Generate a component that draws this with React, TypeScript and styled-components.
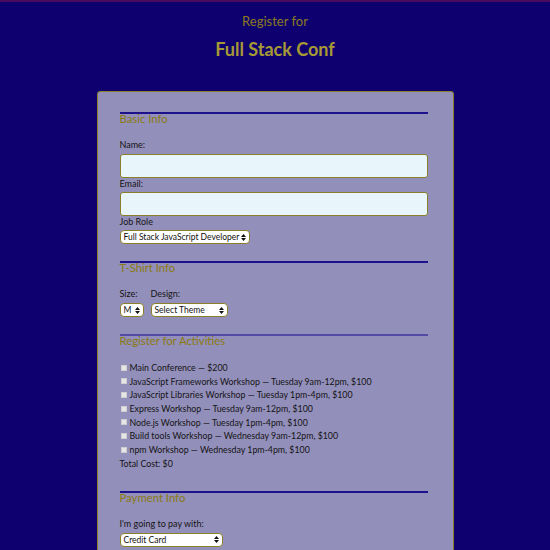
import React from "react";
import styled, { createGlobalStyle } from "styled-components";

const Global = createGlobalStyle`
  html, body { margin: 0; padding: 0; }
  *, *::before, *::after { box-sizing: border-box; }
  body {
    background: #0e006e;
    border-top: 2px solid #4a0a5e;
    font-family: "Lato", "Open Sans", sans-serif;
    color: #141414;
    height: 550px;
    overflow: hidden;
  }
`;

const Header = styled.header`
  text-align: center;
  padding-top: 11px;
`;

const Sub = styled.div`
  font-size: 13px;
  line-height: 16px;
  color: #8a7c1e;
`;

const Title = styled.h1`
  margin: 9px 0 0;
  font-size: 18px;
  line-height: 22px;
  font-weight: 700;
  color: #a69a36;
`;

const Form = styled.form`
  width: 357px;
  margin: 31px auto 0;
  background: #938fbb;
  border: 1px solid #8b7f2a;
  border-radius: 3px;
  padding: 20px 25px 20px 22px;
`;

const Section = styled.section<{ $light?: boolean }>`
  border-top: 2px solid ${(p) => (p.$light ? "#524aa6" : "#1d118c")};
  & + & { margin-top: 17px; }
`;

const Legend = styled.div`
  font-size: 11.3px;
  line-height: 12px;
  color: #8a7a10;
  margin-top: -1px;
  margin-bottom: 14px;
`;

const Label = styled.label<{ $mb?: number }>`
  display: block;
  font-size: 9px;
  line-height: 11px;
  margin-bottom: ${(p) => p.$mb ?? 3}px;
`;

const TextInput = styled.input`
  display: block;
  width: 100%;
  height: 24px;
  margin: 0;
  background: #e8f6fb;
  border: 1px solid #8b7f2a;
  border-radius: 3px;
`;

const SelectWrap = styled.div<{ $w: number }>`
  position: relative;
  width: ${(p) => p.$w}px;
  height: 14px;
  background: #fff;
  border: 1px solid #8b7f2a;
  border-radius: 4px;
  font-size: 8.5px;
  line-height: 12px;
  padding-left: 3px;
  color: #111;
  white-space: nowrap;
  overflow: hidden;
`;

const Arrow = styled.svg`
  position: absolute;
  right: 3px;
  top: 2.5px;
`;

const Select = ({ w, value }: { w: number; value: string }) => (
  <SelectWrap $w={w}>
    {value}
    <Arrow width="5" height="7" viewBox="0 0 5 7">
      <path d="M2.5 0 L5 3 L0 3 Z M0 4 L5 4 L2.5 7 Z" fill="#111" />
    </Arrow>
  </SelectWrap>
);

const Row = styled.div`
  display: flex;
  gap: 7px;
`;

const Col = styled.div``;

const Activities = styled.div`
  margin-top: 1px;
`;

const Activity = styled.label`
  display: flex;
  align-items: center;
  font-size: 8.8px;
  line-height: 13.67px;
  height: 13.67px;
`;

const Box = styled.span`
  width: 6px;
  height: 6px;
  background: #e6e6e6;
  border: 1px solid #cfcfcf;
  margin: 0 3px 0 1px;
`;

const Total = styled.div`
  font-size: 8.8px;
  line-height: 14px;
  margin-bottom: 20px;
`;

const activities = [
  "Main Conference — $200",
  "JavaScript Frameworks Workshop — Tuesday 9am-12pm, $100",
  "JavaScript Libraries Workshop — Tuesday 1pm-4pm, $100",
  "Express Workshop — Tuesday 9am-12pm, $100",
  "Node.js Workshop — Tuesday 1pm-4pm, $100",
  "Build tools Workshop — Wednesday 9am-12pm, $100",
  "npm Workshop — Wednesday 1pm-4pm, $100",
];

export default function App() {
  return (
    <>
      <Global />
      <Header>
        <Sub>Register for</Sub>
        <Title>Full Stack Conf</Title>
      </Header>
      <Form>
        <Section>
          <Legend>Basic Info</Legend>
          <Label $mb={4}>Name:</Label>
          <TextInput />
          <Label>Email:</Label>
          <TextInput />
          <Label>Job Role</Label>
          <Select w={130} value="Full Stack JavaScript Developer" />
        </Section>
        <Section>
          <Legend>T-Shirt Info</Legend>
          <Row>
            <Col>
              <Label $mb={4}>Size:</Label>
              <Select w={24} value="M" />
            </Col>
            <Col>
              <Label $mb={4}>Design:</Label>
              <Select w={77} value="Select Theme" />
            </Col>
          </Row>
        </Section>
        <Section $light>
          <Legend>Register for Activities</Legend>
          <Activities>
            {activities.map((a) => (
              <Activity key={a}>
                <Box />
                {a}
              </Activity>
            ))}
          </Activities>
          <Total>Total Cost: $0</Total>
        </Section>
        <Section>
          <Legend>Payment Info</Legend>
          <Label $mb={4}>I'm going to pay with:</Label>
          <Select w={103} value="Credit Card" />
        </Section>
      </Form>
    </>
  );
}
